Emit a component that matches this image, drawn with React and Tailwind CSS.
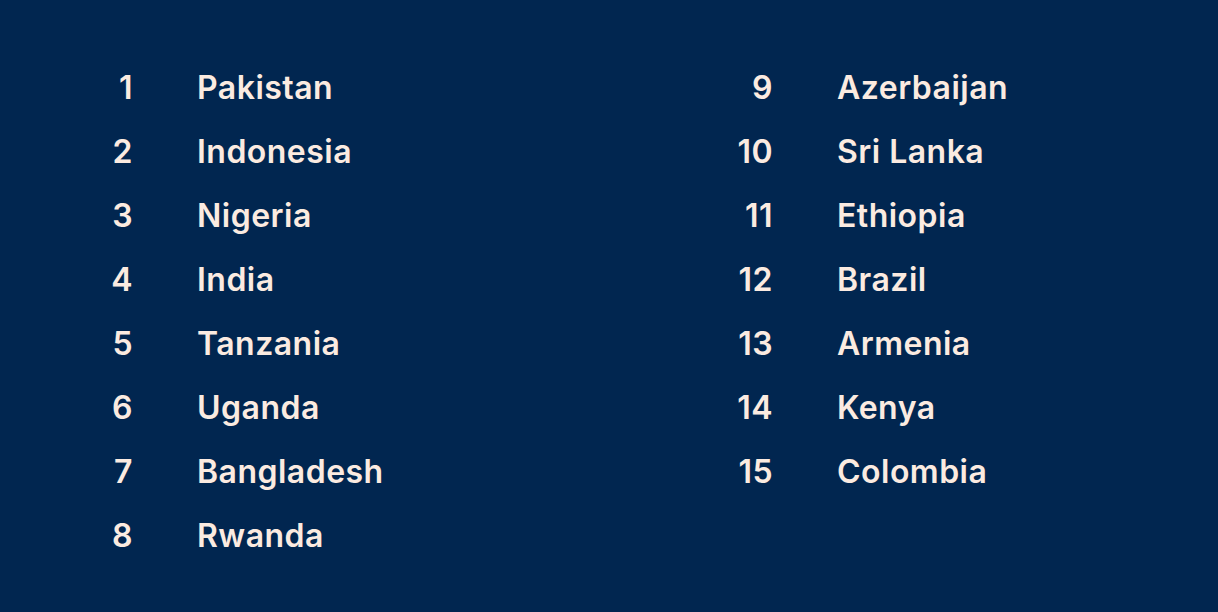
import React from 'react';

const left = ['Pakistan', 'Indonesia', 'Nigeria', 'India', 'Tanzania', 'Uganda', 'Bangladesh', 'Rwanda'];
const right = ['Azerbaijan', 'Sri Lanka', 'Ethiopia', 'Brazil', 'Armenia', 'Kenya', 'Colombia'];

const Column = ({ items, start }) => (
  <ol className="w-[640px] shrink-0">
    {items.map((name, i) => (
      <li key={name} className="flex h-[64px] items-center">
        <span className="w-[133px] text-right">{start + i}</span>
        <span className="ml-[64px]">{name}</span>
      </li>
    ))}
  </ol>
);

export default function App() {
  return (
    <div className="w-[1218px] h-[612px] overflow-hidden bg-[#012650] text-[#fbebe1] font-['Inter',sans-serif] font-semibold text-[32px] tracking-[0.015em]">
      <div className="flex pt-[56px]">
        <Column items={left} start={1} />
        <Column items={right} start={9} />
      </div>
    </div>
  );
}
